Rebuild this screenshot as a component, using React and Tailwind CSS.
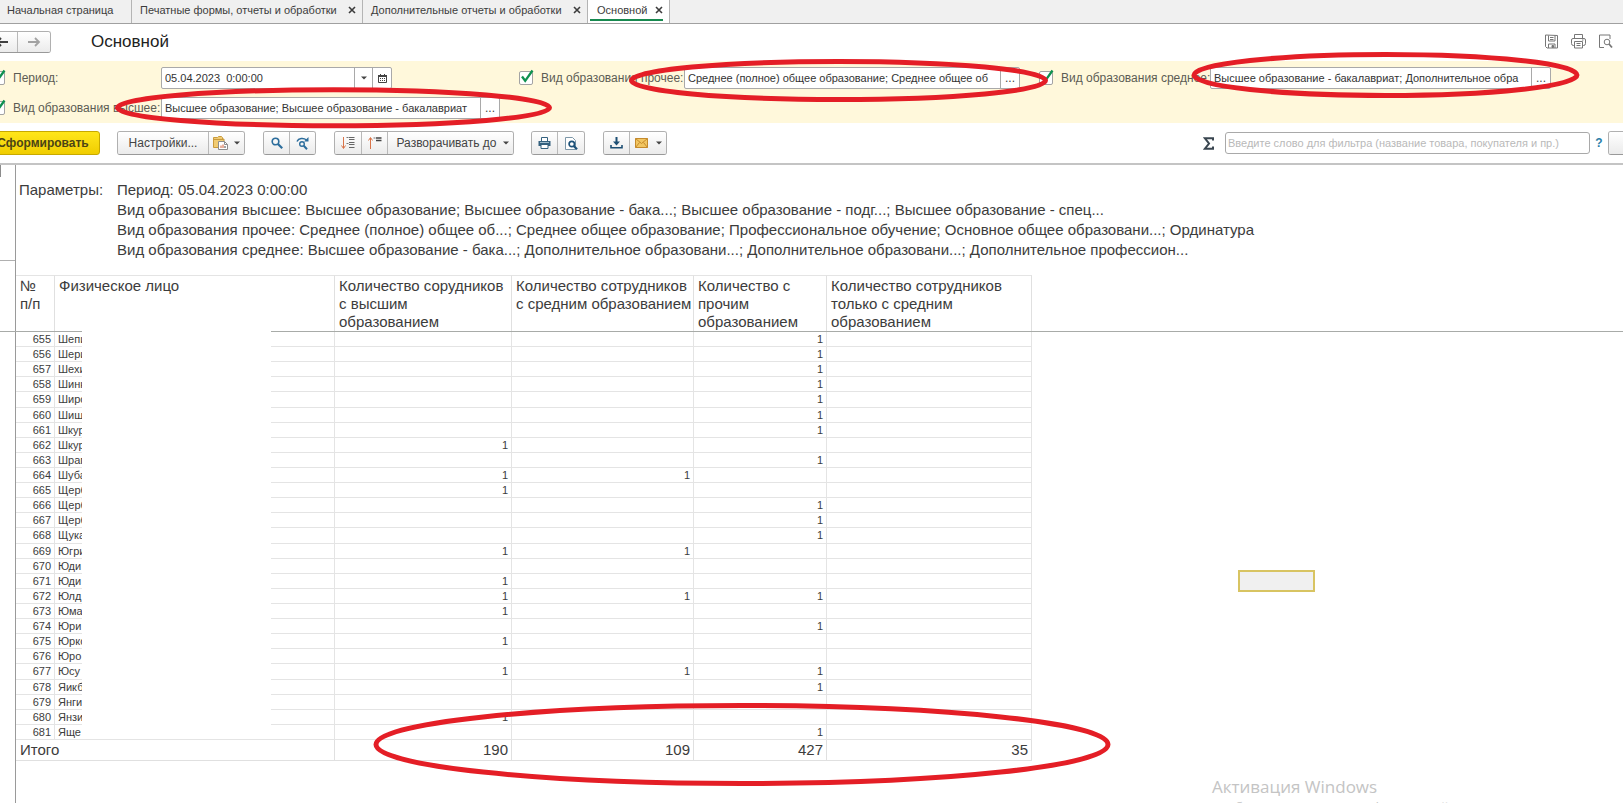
import { useState } from "react";

const TABS = [
  { title: "Начальная страница", closable: false, width: "w-[132px]" },
  { title: "Печатные формы, отчеты и обработки", closable: true, width: "w-[231px]" },
  { title: "Дополнительные отчеты и обработки", closable: true, width: "w-[225px]" },
  { title: "Основной", closable: true, active: true, width: "w-[82px]" },
];

const PARAMETERS = [
  "Период: 05.04.2023 0:00:00",
  "Вид образования высшее: Высшее образование; Высшее образование - бака...; Высшее образование - подг...; Высшее образование - спец...",
  "Вид образования прочее: Среднее (полное) общее об...; Среднее общее образование; Профессиональное обучение; Основное общее образовани...; Ординатура",
  "Вид образования среднее: Высшее образование - бака...; Дополнительное образовани...; Дополнительное образовани...; Дополнительное профессион...",
];

const COLUMNS = [
  "№\nп/п",
  "Физическое лицо",
  "Количество сорудников с высшим образованием",
  "Количество сотрудников с средним образованием",
  "Количество с прочим образованием",
  "Количество сотрудников только с средним образованием",
];

// number, name, higher, secondary, other
const ROWS = [
  [655, "Шепи", "", "", 1],
  [656, "Шери", "", "", 1],
  [657, "Шехи", "", "", 1],
  [658, "Шинк", "", "", 1],
  [659, "Широ", "", "", 1],
  [660, "Шишк", "", "", 1],
  [661, "Шкур", "", "", 1],
  [662, "Шкур", 1, "", ""],
  [663, "Шраг", "", "", 1],
  [664, "Шуба", 1, 1, ""],
  [665, "Щерб", 1, "", ""],
  [666, "Щерб", "", "", 1],
  [667, "Щерб", "", "", 1],
  [668, "Щука", "", "", 1],
  [669, "Югри", 1, 1, ""],
  [670, "Юди", "", "", ""],
  [671, "Юди", 1, "", ""],
  [672, "Юлд", 1, 1, 1],
  [673, "Юма", 1, "", ""],
  [674, "Юри", "", "", 1],
  [675, "Юрко", 1, "", ""],
  [676, "Юро", "", "", ""],
  [677, "Юсу", 1, 1, 1],
  [678, "Яикб", "", "", 1],
  [679, "Янги", "", "", ""],
  [680, "Янзи", 1, "", ""],
  [681, "Яще", "", "", 1],
];

const TOTALS = [190, 109, 427, 35];

const BUTTON =
  "flex h-full items-center justify-center bg-linear-to-b from-white to-[#ebebeb] text-[#444]";

function ButtonGroup({ className = "", children }) {
  return (
    <div
      className={`flex h-6 shrink-0 divide-x divide-[#b9b9b9] overflow-hidden rounded-[3px] border border-[#b0b0b0] border-b-[#999] ${className}`}
    >
      {children}
    </div>
  );
}

function Caret() {
  return (
    <svg viewBox="0 0 6 4" className="h-1 w-[6px]" aria-hidden="true">
      <path d="M0 0.5h6L3 3.5z" fill="#444" />
    </svg>
  );
}

function Field({ id, label, labelWidth, inputWidth, value, children }) {
  const [checked, setChecked] = useState(true);
  const [text, setText] = useState(value);

  return (
    <div className="flex h-[22px] items-center">
      <div className={`flex shrink-0 items-center gap-2 ${labelWidth}`}>
        <span className="relative block size-[14px] shrink-0">
          <input
            type="checkbox"
            aria-label={`Использовать: ${label}`}
            checked={checked}
            onChange={(e) => setChecked(e.target.checked)}
            className="block size-[14px] appearance-none rounded-[2px] border border-[#a3a3a3] bg-white"
          />
          {checked && (
            <svg
              viewBox="0 0 14 14"
              className="pointer-events-none absolute inset-0 size-[14px] overflow-visible"
              aria-hidden="true"
            >
              <path d="M3 5.5L6.2 9.8L13.5 -0.5" fill="none" stroke="#0f9150" strokeWidth="2.3" />
            </svg>
          )}
        </span>
        <label htmlFor={id} className="whitespace-nowrap text-[#5c5c54]">
          {label}:
        </label>
      </div>
      <div
        className={`flex h-[22px] shrink-0 divide-x divide-[#a9a9a9] overflow-hidden rounded-[2px] border border-[#a9a9a9] bg-white ${inputWidth}`}
      >
        <input
          id={id}
          type="text"
          value={text}
          onChange={(e) => setText(e.target.value)}
          className="h-full min-w-0 flex-1 px-[3px] text-[11px] text-[#333] outline-none"
        />
        {children || (
          <button type="button" className="h-full w-[18px] text-[#444]">
            ...
          </button>
        )}
      </div>
    </div>
  );
}

function TabBar() {
  return (
    <nav className="flex h-6 shrink-0 border-b border-[#a0a0a0] bg-[#f0f0f0] text-[11px]">
      {TABS.map((tab) => (
        <div
          key={tab.title}
          className={`flex h-[23px] shrink-0 justify-between border-r border-[#b4b4b4] pr-[6px] ${tab.width} ${
            tab.active ? "bg-white pl-[2px]" : "pl-2 first:pl-[7px]"
          }`}
        >
          <button
            type="button"
            className={`h-[21px] whitespace-nowrap text-[#3c3c3c] ${
              tab.active ? "flex-1 border-b-2 border-[#17894f] pl-[7px] text-left" : "pb-[2px]"
            }`}
          >
            {tab.title}
          </button>
          {tab.closable && (
            <button
              type="button"
              aria-label="Закрыть"
              className={`flex h-[21px] items-center ${
                tab.active ? "border-b-2 border-[#17894f]" : "pb-[2px]"
              }`}
            >
              <svg viewBox="0 0 8 8" className="size-2" aria-hidden="true">
                <path d="M1 1l6 6M7 1L1 7" stroke="#3c3c3c" strokeWidth="1.6" />
              </svg>
            </button>
          )}
        </div>
      ))}
    </nav>
  );
}

function Header() {
  return (
    <header className="flex h-[37px] shrink-0 items-center justify-between pr-[10px] pb-[2px]">
      <div className="flex items-center gap-10">
        <ButtonGroup className="-ml-[14px] h-[22px]">
          <button type="button" aria-label="Назад" className={`${BUTTON} w-[31px]`}>
            <svg viewBox="0 0 14 10" className="h-[10px] w-[14px]" aria-hidden="true">
              <path d="M13 5H2M6 1L2 5l4 4" fill="none" stroke="#3f3f3f" strokeWidth="2" />
            </svg>
          </button>
          <button type="button" aria-label="Вперед" className={`${BUTTON} w-8`}>
            <svg viewBox="0 0 14 10" className="h-[10px] w-[14px]" aria-hidden="true">
              <path d="M1 5h11M8 1l4 4-4 4" fill="none" stroke="#a2a2a2" strokeWidth="1.8" />
            </svg>
          </button>
        </ButtonGroup>
        <h1 className="text-[17px] text-[#222]">Основной</h1>
      </div>
      <div className="flex gap-3">
        <button type="button" aria-label="Сохранить">
          <svg viewBox="0 0 15 15" className="size-[15px]" fill="none" stroke="#777" aria-hidden="true">
            <path d="M1.5 1v11.5l1.5 1.5h10.5V1.5z" />
            <path d="M4.5 1.5V7H11V1.5M6 3.5h3.5M6 5.5h3.5M4.5 14v-4H11v4" />
            <path d="M8 11.5h1.5v2H8z" fill="#777" />
          </svg>
        </button>
        <button type="button" aria-label="Печать">
          <svg viewBox="0 0 15 15" className="size-[15px]" fill="none" stroke="#777" aria-hidden="true">
            <path d="M3.5 4V0.5h8V4M3.5 11.5h-1a2 2 0 0 1-2-2V6A1.5 1.5 0 0 1 2 4.5h11A1.5 1.5 0 0 1 14.5 6v3.5a2 2 0 0 1-2 2h-1" />
            <path d="M3.5 7.5h8V14h-8zM5.5 9.5h4M5.5 11.5h4M11 6h1.5" />
          </svg>
        </button>
        <button type="button" aria-label="Просмотр">
          <svg viewBox="0 0 15 15" className="size-[15px]" fill="none" stroke="#777" aria-hidden="true">
            <path d="M6 13.5H1.5V1H12v4" />
            <circle cx="9" cy="8" r="2.8" />
            <path d="M11 10l3 3.5" strokeWidth="1.8" />
          </svg>
        </button>
      </div>
    </header>
  );
}

function Filters() {
  return (
    <section className="grid shrink-0 grid-cols-[519px_520px_1fr] gap-y-2 bg-[#fff8db] pt-[6px] pb-1">
      <Field
        id="period"
        label="Период"
        labelWidth="-ml-[9px] w-[170px]"
        inputWidth="w-[231px]"
        value="05.04.2023  0:00:00"
      >
        <button type="button" aria-label="Выбрать" className="flex h-full w-[18px] items-center justify-center">
          <Caret />
        </button>
        <button type="button" aria-label="Календарь" className="flex h-full w-[18px] items-center justify-center">
          <svg viewBox="0 0 9 9" className="size-[9px]" aria-hidden="true">
            <path d="M0.5 1.5h8v7h-8z" fill="none" stroke="#444" />
            <path d="M0 1h9v2H0zM2 0h1v2H2zM6 0h1v2H6z" fill="#444" />
            <path d="M2 4.5h5M2 6.5h5" stroke="#444" strokeDasharray="1 1" />
          </svg>
        </button>
      </Field>
      <Field
        id="other"
        label="Вид образования прочее"
        labelWidth="w-[165px]"
        inputWidth="w-[336px]"
        value="Среднее (полное) общее образование; Среднее общее об"
      />
      <Field
        id="secondary"
        label="Вид образования среднее"
        labelWidth="w-[171px]"
        inputWidth="w-[341px]"
        value="Высшее образование - бакалавриат; Дополнительное обра"
      />
      <Field
        id="higher"
        label="Вид образования высшее"
        labelWidth="-ml-[9px] w-[170px]"
        inputWidth="w-[339px]"
        value="Высшее образование; Высшее образование - бакалавриат"
      />
    </section>
  );
}

function Toolbar() {
  const [filter, setFilter] = useState("");

  return (
    <section className="flex h-10 shrink-0 items-center">
      <button
        type="button"
        className="-ml-2 h-6 w-[108px] shrink-0 rounded-[3px] border border-[#c7a900] bg-linear-to-b from-[#ffe61a] to-[#f0cd00] pr-[6px] text-[12px] font-bold text-[#4b4415]"
      >
        Сформировать
      </button>
      <ButtonGroup className="ml-[17px]">
        <button type="button" className={`${BUTTON} w-[91px]`}>
          Настройки...
        </button>
        <button type="button" aria-label="Варианты отчета" className={`${BUTTON} w-[35px] gap-[6px]`}>
          <svg viewBox="0 0 15 14" className="h-[14px] w-[15px]" aria-hidden="true">
            <path d="M0.5 11.5v-10h4l1-1h3l1 1V3H11v8.5z" fill="#f0cb72" stroke="#c99a3c" />
            <path d="M0.5 3.5h10" stroke="#c99a3c" />
            <path d="M5.5 5.5h6l3 3v5h-9z" fill="#fff" stroke="#8c8c8c" />
            <path d="M11.5 5.5v3h3" fill="none" stroke="#8c8c8c" />
            <path d="M8 12V9.5M10 12V8.5" stroke="#d0603a" />
            <path d="M12 12v-2" stroke="#444" />
          </svg>
          <Caret />
        </button>
      </ButtonGroup>
      <ButtonGroup className="ml-[18px]">
        <button type="button" aria-label="Найти" className={`${BUTTON} w-[26px]`}>
          <svg viewBox="0 0 12 12" className="size-3" aria-hidden="true">
            <circle cx="4.5" cy="4.5" r="3.3" fill="none" stroke="#2c6d9c" strokeWidth="1.6" />
            <path d="M7 7l4.2 4.2" stroke="#2c6d9c" strokeWidth="2.2" />
          </svg>
        </button>
        <button type="button" aria-label="Найти далее" className={`${BUTTON} w-[25px]`}>
          <svg viewBox="0 0 13 13" className="size-[13px]" aria-hidden="true">
            <path d="M1 4.5C2.5 1 7.5 0.5 10.5 3" fill="none" stroke="#2c6d9c" strokeWidth="1.5" />
            <path d="M8 4.5h4.5V0z" fill="#2c6d9c" />
            <circle cx="6" cy="7" r="2.3" fill="none" stroke="#2c6d9c" strokeWidth="1.4" />
            <path d="M7.8 8.8l3.2 3.4" stroke="#2c6d9c" strokeWidth="2" />
          </svg>
        </button>
      </ButtonGroup>
      <ButtonGroup className="ml-[18px]">
        <button type="button" aria-label="Развернуть все" className={`${BUTTON} w-[27px]`}>
          <svg viewBox="0 0 14 14" className="size-[14px]" fill="none" aria-hidden="true">
            <path d="M2.5 1v11M0.5 9.5l2 3 2-3" stroke="#d9744a" />
            <path d="M5.5 1.5h2M5.5 7.5h2" stroke="#777" />
            <path d="M8 1.5h5.500M8 3.500h5.500M8 6.500h5.500M8 8.500h5.500M8 11.500h5.500" stroke="#666" />
          </svg>
        </button>
        <button type="button" aria-label="Свернуть все" className={`${BUTTON} w-[26px]`}>
          <svg viewBox="0 0 14 14" className="size-[14px]" fill="none" aria-hidden="true">
            <path d="M2.5 13V2M0.5 4.5l2-3 2 3" stroke="#d9744a" />
            <path d="M5.5 2h2" stroke="#777" />
            <path d="M8 2h5.500M8 4.500h5.500" stroke="#444" strokeWidth="1.5" />
          </svg>
        </button>
        <button type="button" className={`${BUTTON} w-[125px] gap-[6px] pl-1`}>
          Разворачивать до
          <Caret />
        </button>
      </ButtonGroup>
      <ButtonGroup className="ml-[17px]">
        <button type="button" aria-label="Печать" className={`${BUTTON} w-[26px]`}>
          <svg viewBox="0 0 13 12" className="h-3 w-[13px]" aria-hidden="true">
            <path d="M3.5 4V0.5h6V4" fill="#fff" stroke="#34617f" />
            <path d="M0.5 4h12v5h-12z" fill="#34617f" />
            <path d="M3 7.5h7v4H3z" fill="#fff" stroke="#34617f" />
            <path d="M2 5.5h9" stroke="#9dbacb" />
          </svg>
        </button>
        <button type="button" aria-label="Предварительный просмотр" className={`${BUTTON} w-[26px]`}>
          <svg viewBox="0 0 13 13" className="size-[13px]" aria-hidden="true">
            <path d="M0.5 0.5h7l3 3v9h-10z" fill="#fff" stroke="#7d97a8" />
            <circle cx="6.8" cy="7" r="2.7" fill="#fff" stroke="#1d5279" strokeWidth="1.7" />
            <path d="M8.8 9l3.2 3.3" stroke="#1d5279" strokeWidth="2.2" />
          </svg>
        </button>
      </ButtonGroup>
      <ButtonGroup className="ml-[18px]">
        <button type="button" aria-label="Сохранить" className={`${BUTTON} w-[26px]`}>
          <svg viewBox="0 0 13 12" className="h-3 w-[13px]" aria-hidden="true">
            <path d="M6.5 0v6" stroke="#1d4f74" strokeWidth="2" />
            <path d="M3 4.5h7L6.5 8.5z" fill="#1d4f74" />
            <path d="M1 8v2.7h11V8" fill="none" stroke="#1d4f74" strokeWidth="1.6" />
          </svg>
        </button>
        <button type="button" aria-label="Отправить" className={`${BUTTON} w-9 gap-2`}>
          <svg viewBox="0 0 13 10" className="h-[10px] w-[13px]" aria-hidden="true">
            <path d="M0.5 0.5h12v9h-12z" fill="#f2c662" stroke="#c58a2c" />
            <path d="M0.5 0.5l6 5 6-5M0.5 9.5l4-5M12.5 9.5l-4-5" fill="none" stroke="#c58a2c" />
          </svg>
          <Caret />
        </button>
      </ButtonGroup>
      <div className="-mr-[7px] ml-auto flex shrink-0 items-center">
        <button type="button" aria-label="Сумма" className="mr-[11px]">
          <svg viewBox="0 0 11 13" className="h-[13px] w-[11px]" aria-hidden="true">
            <path
              d="M10 3.5V1.2H1.8L6 6.5l-4.2 5.3H10V9.5"
              fill="none"
              stroke="#3a4650"
              strokeWidth="2"
            />
          </svg>
        </button>
        <input
          type="text"
          aria-label="Фильтр"
          value={filter}
          onChange={(e) => setFilter(e.target.value)}
          placeholder="Введите слово для фильтра (название товара, покупателя и пр.)"
          className="h-[22px] w-[365px] rounded-[3px] border border-[#a9a9a9] px-[2px] text-[11px] text-[#333] outline-none placeholder:text-[#b9b9b9]"
        />
        <a href="#help" className="mx-[5px] w-2 text-center font-bold text-[#2a7ea8]">
          ?
        </a>
        <ButtonGroup>
          <button type="button" aria-label="Еще" className={`${BUTTON} w-5`} />
        </ButtonGroup>
      </div>
    </section>
  );
}

function ReportTable() {
  return (
    <div className="relative">
      <table className="h-[486px] w-[1016px] table-fixed border-separate border-spacing-0 text-[#3c3c3c]">
        <colgroup>
          <col className="w-[39px]" />
          <col className="w-[280px]" />
          <col className="w-[177px]" />
          <col className="w-[182px]" />
          <col className="w-[133px]" />
          <col className="w-[205px]" />
        </colgroup>
        <thead>
          <tr className="h-[57px]">
            {COLUMNS.map((title) => (
              <th
                key={title}
                scope="col"
                className="border-t border-r border-t-[#e4e4e4] border-r-[#e0e0e0] pt-px pl-1 text-left align-top text-[15px] leading-[18px] font-normal whitespace-pre-line"
              >
                {title}
              </th>
            ))}
          </tr>
        </thead>
        <tbody className="text-[11px] leading-[14px]">
          {ROWS.map(([number, name, ...counts]) => (
            <tr key={number}>
              <td className="border-r border-b border-[#e4e4e4] pr-[3px] text-right">{number}</td>
              <td className="border-r border-b border-[#e4e4e4] pl-[3px]">{name}</td>
              {[...counts, ""].map((count, i) => (
                <td key={i} className="border-r border-b border-[#e4e4e4] pr-[3px] text-right">
                  {count}
                </td>
              ))}
            </tr>
          ))}
        </tbody>
        <tfoot className="text-[15px] leading-5">
          <tr className="h-[21px]">
            <th
              scope="row"
              colSpan={2}
              className="border-r border-b border-[#e0e0e0] pl-1 text-left font-normal"
            >
              Итого
            </th>
            {TOTALS.map((total) => (
              <td key={total} className="border-r border-b border-[#e0e0e0] pr-[3px] text-right">
                {total}
              </td>
            ))}
          </tr>
        </tfoot>
      </table>
      {/* Personal data cover */}
      <div className="absolute top-[55px] bottom-[22px] left-[66px] z-20 w-[189px] bg-white" />
    </div>
  );
}

function Report() {
  return (
    <main className="flex min-h-0 flex-1 border-t-2 border-[#c4c4c4]">
      {/* Group levels strip */}
      <aside className="w-4 shrink-0 border-r border-[#9a9a9a]">
        <div className="h-[96px] border-b border-[#b0b0b0]">
          <div className="h-3 w-px bg-[#8c8c8c]" />
        </div>
      </aside>
      <div className="min-w-0 flex-1">
        <div className="flex h-[110px] gap-[18px] pt-[15px] pl-[3px] text-[15px] leading-5 text-[#3c3c3c]">
          <p className="w-20 shrink-0">Параметры:</p>
          <div className="whitespace-nowrap">
            {PARAMETERS.map((line) => (
              <p key={line}>{line}</p>
            ))}
          </div>
        </div>
        <div className="relative">
          {/* Frozen header line runs across the whole sheet */}
          <div className="absolute top-[56px] right-0 -left-4 z-10 h-px bg-[#a8aba8]" />
          <ReportTable />
        </div>
      </div>
    </main>
  );
}

// Hand-drawn red marks
function Marks() {
  return (
    <svg
      className="pointer-events-none absolute top-0 left-0 z-30 h-[803px] w-[1623px]"
      viewBox="0 0 1623 803"
      fill="none"
      stroke="#e41e26"
      strokeWidth="5"
      aria-hidden="true"
    >
      <ellipse cx="333.5" cy="107.7" rx="216" ry="18" />
      <ellipse cx="838.5" cy="80.5" rx="207" ry="19" />
      <ellipse cx="1385.5" cy="75" rx="191.5" ry="20.5" />
      <ellipse cx="742" cy="744.5" rx="366" ry="39" />
    </svg>
  );
}

function App() {
  return (
    <div className="relative flex h-screen w-full flex-col overflow-hidden bg-white font-['Liberation_Sans',Arial,sans-serif] text-[12px] leading-4">
      <TabBar />
      <Header />
      <Filters />
      <Toolbar />
      <Report />
      <div className="absolute top-[570px] left-[1238px] h-[22px] w-[77px] border-2 border-[#d8c462] bg-[#f0f0f0]" />
      <div className="absolute top-[775px] left-[1212px] font-['Open_Sans','Noto_Sans',sans-serif] whitespace-nowrap text-[#c4c4c4]">
        <p className="text-[17px] leading-6">Активация Windows</p>
        <p className="text-[13px] leading-4">
          Чтобы активировать Windows, перейдите в раздел "Параметры".
        </p>
      </div>
      <Marks />
    </div>
  );
}

export default App;
